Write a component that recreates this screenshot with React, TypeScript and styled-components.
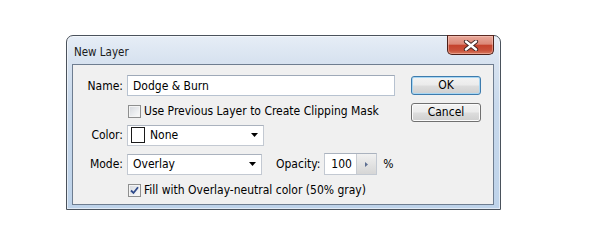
import styled, { createGlobalStyle } from "styled-components";

const GlobalStyle = createGlobalStyle`
  html, body {
    margin: 0;
    background: #ffffff;
  }
  body {
    font-family: "DejaVu Sans Condensed", "DejaVu Sans", sans-serif;
    font-stretch: condensed;
    font-size: 12px;
    color: #000;
  }
`;

const Check = ({ checked, label }: { checked: boolean; label: string }) => (
  <CheckRow>
    <CheckBox $checked={checked}>
      {checked && (
        <svg width="9" height="9" viewBox="0 0 9 9">
          <path d="M1 4.5 L3.5 7 L8 1.2" fill="none" stroke="#2f4a8a" strokeWidth="1.8" />
        </svg>
      )}
    </CheckBox>
    <span>{label}</span>
  </CheckRow>
);

const Arrow = () => (
  <svg width="7" height="4" viewBox="0 0 7 4">
    <path d="M0 0 H7 L3.5 4 Z" fill="#000" />
  </svg>
);

const App = () => {
  return (
    <Page>
      <GlobalStyle />
      <Window>
        <TitleBar>
          <Title>New Layer</Title>
          <CloseButton aria-label="Close">
            <svg width="16" height="11" viewBox="0 0 16 11">
              <path d="M3 1.5 L13 9.5 M13 1.5 L3 9.5" stroke="#3b2220" strokeWidth="4.2" strokeLinecap="round" />
              <path d="M3 1.5 L13 9.5 M13 1.5 L3 9.5" stroke="#ffffff" strokeWidth="2.4" strokeLinecap="round" />
            </svg>
          </CloseButton>
        </TitleBar>
        <Client>
          <Form>
            <Row $top={0} $height={21}>
              <Label>Name:</Label>
              <TextInput readOnly value="Dodge & Burn" />
            </Row>
            <Row $top={5} $height={20}>
              <Check checked={false} label="Use Previous Layer to Create Clipping Mask" />
            </Row>
            <Row $top={4} $height={20}>
              <Label>Color:</Label>
              <Select $width={137}>
                <Swatch />
                <SelectText>None</SelectText>
                <Arrow />
              </Select>
            </Row>
            <Row $top={8} $height={22}>
              <Label>Mode:</Label>
              <Select $width={135}>
                <SelectText>Overlay</SelectText>
                <Arrow />
              </Select>
              <SideLabel>Opacity:</SideLabel>
              <Spin>
                <SpinValue>100</SpinValue>
                <SpinButton>
                  <svg width="3" height="5" viewBox="0 0 3 5">
                    <path d="M0 0 L3 2.5 L0 5 Z" fill="#5d6f92" />
                  </svg>
                </SpinButton>
              </Spin>
              <Unit>%</Unit>
            </Row>
            <Row $top={5} $height={20}>
              <Check checked label="Fill with Overlay-neutral color (50% gray)" />
            </Row>
          </Form>
          <Buttons>
            <Button $primary>OK</Button>
            <Button>Cancel</Button>
          </Buttons>
        </Client>
      </Window>
    </Page>
  );
};

export default App;

const Page = styled.main`
  width: 600px;
  height: 247px;
  box-sizing: border-box;
  padding: 35px 0 0 66px;
`;

const Window = styled.section`
  width: 435px;
  height: 175px;
  box-sizing: border-box;
  display: flex;
  flex-direction: column;
  padding: 0 6px 4px 5px;
  border: 1px solid #4a525c;
  border-radius: 7px 7px 0 0;
  background: linear-gradient(
    to bottom,
    #e6edf6 0%,
    #d8e3f0 14%,
    #c8d9ec 40%,
    #bed3ea 100%
  );
  box-shadow: inset 0 0 0 1px rgba(255, 255, 255, 0.55);
`;

const TitleBar = styled.header`
  height: 28px;
  display: flex;
  justify-content: space-between;
  align-items: flex-start;
`;

const Title = styled.h1`
  margin: 9px 0 0 2px;
  font-size: 11.5px;
  font-weight: 400;
  line-height: 14px;
  color: #1a1a1a;
`;

const CloseButton = styled.button`
  width: 47px;
  height: 20px;
  margin-top: -1px;
  padding: 0;
  display: flex;
  align-items: center;
  justify-content: center;
  border: 1px solid #4b1f18;
  border-top-color: #5a2a22;
  border-radius: 0 0 5px 5px;
  background: linear-gradient(
    to bottom,
    #e9a99b 0%,
    #dc8877 45%,
    #c5432d 52%,
    #c9513a 80%,
    #d77a5e 100%
  );
  box-shadow: inset 0 0 0 1px rgba(255, 210, 200, 0.45);
`;

const Client = styled.div`
  flex: 1;
  display: flex;
  border: 1px solid #6e7d90;
  background: #f0f0f0;
`;

const Form = styled.div`
  flex: 1;
  display: flex;
  flex-direction: column;
  padding-top: 10px;
`;

const Row = styled.div<{ $top: number; $height: number }>`
  display: flex;
  align-items: center;
  margin-top: ${(p) => p.$top}px;
  height: ${(p) => p.$height}px;
`;

const Label = styled.span`
  width: 50px;
  margin-right: 4px;
  text-align: right;
`;

const TextInput = styled.input`
  width: 268px;
  height: 21px;
  box-sizing: border-box;
  margin: 0;
  padding: 0 0 0 5px;
  border: 1px solid #b7c2d0;
  border-top-color: #9ea9b8;
  background: #fff;
  font: inherit;
  font-stretch: condensed;
  color: #000;
  outline: none;
`;

const CheckRow = styled.label`
  display: flex;
  align-items: center;
  gap: 3px;
  padding-left: 55px;
`;

const CheckBox = styled.span<{ $checked: boolean }>`
  width: 13px;
  height: 13px;
  box-sizing: border-box;
  display: flex;
  align-items: center;
  justify-content: center;
  border: 1px solid #8e8f8f;
  background: linear-gradient(135deg, #d4d7dc 0%, #eceef0 60%, #fbfbfb 100%);
  box-shadow: inset 0 0 0 1px #f4f4f4;
`;

const Select = styled.div<{ $width: number }>`
  width: ${(p) => p.$width}px;
  height: 21px;
  box-sizing: border-box;
  display: flex;
  align-items: center;
  padding: 0 5px 0 3px;
  border: 1px solid #c3c9d2;
  border-top-color: #aab2be;
  background: #fff;
`;

const Swatch = styled.span`
  width: 14px;
  height: 16px;
  box-sizing: border-box;
  border: 1px solid #1a1a1a;
  background: #fff;
  margin-right: 3px;
`;

const SelectText = styled.span`
  flex: 1;
  padding-left: 2px;
`;

const SideLabel = styled.span`
  margin: 0 4px 0 14px;
`;

const Spin = styled.div`
  width: 53px;
  height: 22px;
  box-sizing: border-box;
  display: flex;
  border: 1px solid #c3c9d2;
  border-top-color: #aab2be;
  background: #fff;
`;

const SpinValue = styled.span`
  flex: 1;
  display: flex;
  align-items: center;
  padding-left: 6px;
`;

const SpinButton = styled.span`
  width: 19px;
  display: flex;
  align-items: center;
  justify-content: center;
  border-left: 1px solid #c8ccd2;
  background: linear-gradient(to bottom, #f1f1f1 0%, #e3e3e3 50%, #d6d6d6 100%);
`;

const Unit = styled.span`
  margin-left: 6px;
`;

const Buttons = styled.div`
  width: 70px;
  margin: 0 12px 0 16px;
  padding-top: 11px;
  display: flex;
  flex-direction: column;
  gap: 8px;
`;

const Button = styled.button<{ $primary?: boolean }>`
  width: 70px;
  height: 19px;
  padding: 0;
  border: 1px solid ${(p) => (p.$primary ? "#3d7bad" : "#707070")};
  border-radius: 3px;
  background: linear-gradient(
    to bottom,
    #f3f3f3 0%,
    #ebebeb 48%,
    #dddddd 52%,
    #cfcfcf 100%
  );
  box-shadow: inset 0 0 0 1px ${(p) => (p.$primary ? "#a7d6f3" : "#fbfbfb")};
  font: inherit;
  font-stretch: condensed;
  color: #000;
  line-height: 17px;
`;
